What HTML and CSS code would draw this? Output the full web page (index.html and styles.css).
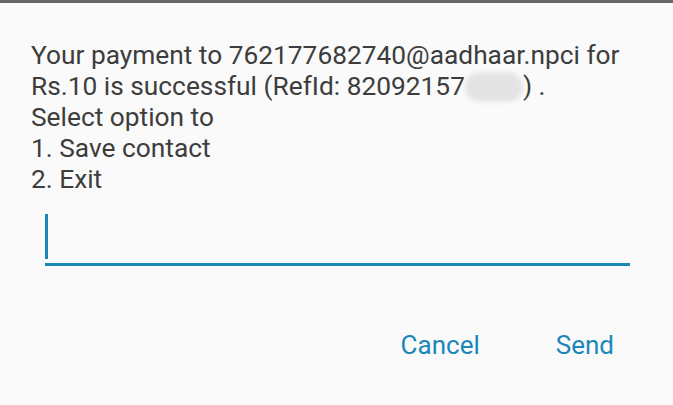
FILE: index.html
```html
<!DOCTYPE html>
<html>
<head>
<meta charset="utf-8">
<link rel="stylesheet" href="styles.css">
</head>
<body>
<div class="statusbar"></div>
<div class="dialog">
  <div class="message">
    <div>Your payment to 762177682740@aadhaar.npci for</div>
    <div>Rs.10 is successful (RefId: 82092157<span class="redact"></span>) .</div>
    <div>Select option to</div>
    <div>1. Save contact</div>
    <div>2. Exit</div>
  </div>
  <div class="field">
    <span class="cursor"></span>
  </div>
  <div class="actions">
    <span class="btn">Cancel</span>
    <span class="btn">Send</span>
  </div>
</div>
</body>
</html>
```
FILE: styles.css
```css
html, body {
  margin: 0;
  padding: 0;
  background: #fafafa;
  width: 673px;
  height: 405px;
  overflow: hidden;
  font-family: Roboto, "Noto Sans", sans-serif;
}
.statusbar {
  height: 3px;
  background: #676767;
}
.dialog {
  padding: 37px 43px 0 31px;
}
.message {
  font-size: 26.3px;
  line-height: 31px;
  color: #3d3d3d;
}
.redact {
  display: inline-block;
  width: 58px;
  height: 30px;
  vertical-align: -7px;
  border-radius: 15px;
  background: #e4e4e4;
  filter: blur(2px);
}
.field {
  margin: 19px 0 0 14px;
  height: 49px;
  border-bottom: 3px solid #1b87b9;
  display: flex;
  align-items: flex-start;
}
.cursor {
  width: 3px;
  height: 45px;
  background: #1b87b9;
}
.actions {
  display: flex;
  justify-content: flex-end;
  gap: 76px;
  margin-top: 64px;
  padding-right: 16px;
  font-size: 26px;
  color: #1b87b9;
}
```
